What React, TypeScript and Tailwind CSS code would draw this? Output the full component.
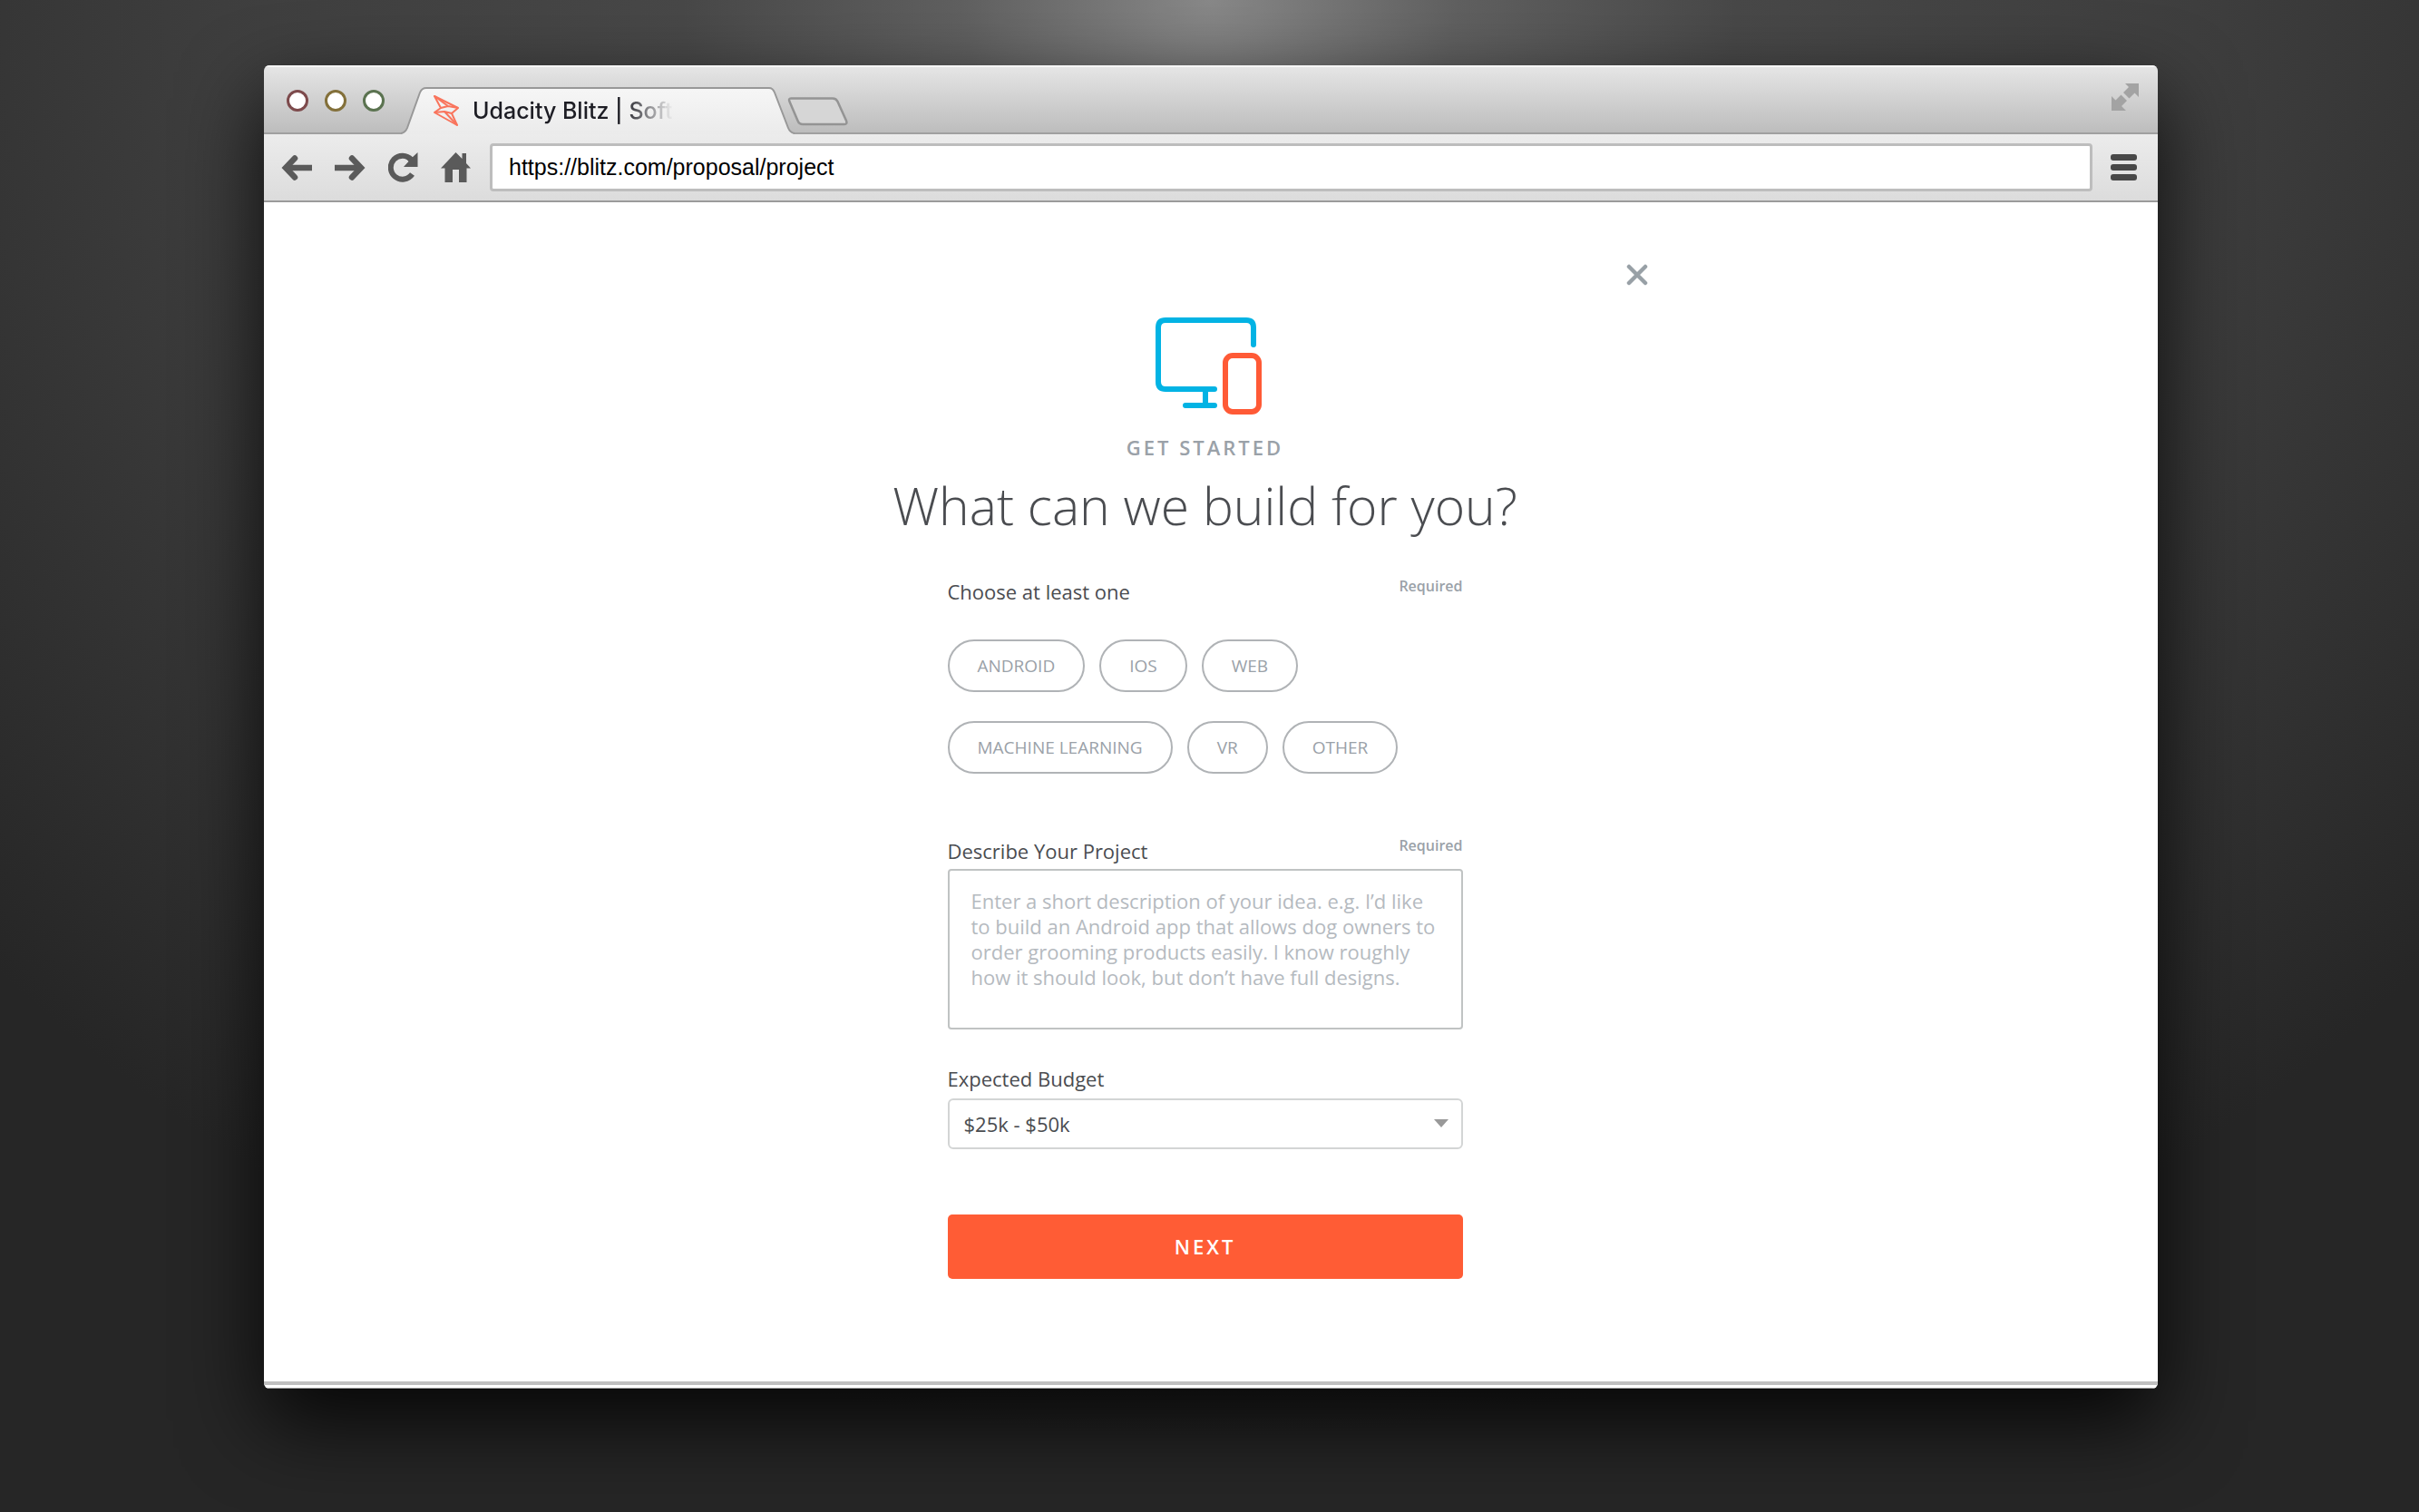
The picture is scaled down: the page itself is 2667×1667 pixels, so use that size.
import React from "react";

const pillRows = [
  ["ANDROID", "IOS", "WEB"],
  ["MACHINE LEARNING", "VR", "OTHER"],
];

function TitleBar() {
  return (
    <div className="flex h-[76px] items-end border-b-2 border-[#a0a0a0] bg-linear-to-b from-[#e6e6e6] to-[#bdbdbd] pl-[25px] shadow-[inset_0_2px_0_#f5f5f5]">
      <div className="flex h-full items-center gap-[18px] pt-1">
        <button aria-label="Close window" className="size-6 rounded-full border-[3px] border-[#7d4a4c] bg-white" />
        <button aria-label="Minimize window" className="size-6 rounded-full border-[3px] border-[#83703a] bg-white" />
        <button aria-label="Zoom window" className="size-6 rounded-full border-[3px] border-[#5b7350] bg-white" />
      </div>
      <div className="relative -mb-[2px] ml-[18px] flex h-[52px] w-[434px] items-center pl-[36px]">
        <svg className="absolute inset-0 size-full" viewBox="0 0 434 52" preserveAspectRatio="none" aria-hidden="true">
          <defs>
            <linearGradient id="tab" x1="0" y1="0" x2="0" y2="1">
              <stop offset="0" stopColor="#f6f6f6" />
              <stop offset="1" stopColor="#ebebeb" />
            </linearGradient>
          </defs>
          <path d="M0 52Q5 51 7 46L21 6Q23 1 28 1H406Q410 1 412 6L427 46Q429 51 434 52Z" fill="url(#tab)" />
          <path d="M0 51Q5 50 7 45L21 6Q23 1 28 1H406Q410 1 412 6L427 45Q429 50 434 51" fill="none" stroke="#989898" strokeWidth="2" />
        </svg>
        <svg className="relative h-[34px] w-[28px]" viewBox="0 0 28 34" fill="none" stroke="#f9745c" strokeWidth="2" strokeLinejoin="round" aria-hidden="true">
          <path d="M1 1L27 14L20 20L26 33L1 19L8 14Z" />
          <path d="M1 1L16 12M8 14L16 12L27 14M1 19L12 18L20 20M12 18L26 33" />
        </svg>
        <span className="relative ml-[15px] bg-linear-to-r from-[#1d1d24] from-75% to-transparent bg-clip-text font-['Inter'] text-[25px] leading-8 font-medium whitespace-nowrap text-transparent">
          Udacity Blitz | Soft
        </span>
      </div>
      <button aria-label="New tab" className="mb-[7px] -ml-[8px]">
        <svg className="block h-[32px] w-[68px]" viewBox="0 0 68 32">
          <path d="M4 1.500H50Q54 1.500 55.500 5L65 26Q66.500 30 63 30H17Q13 30 11.500 26L2.500 5Q1 1.500 4 1.500Z" fill="#d6d6d6" stroke="#949494" strokeWidth="2.500" />
        </svg>
      </button>
      <button aria-label="Full screen" className="mr-[21px] mb-[24px] ml-auto">
        <svg className="block size-[30px]" viewBox="0 0 30 30" fill="#a3a3a3">
          <path d="M15 0H30V15L25.500 10.500L19.500 16.500L13 10L19 4Z" />
          <path d="M0 14L4.500 18.500L10.500 12.500L17 19L11 25L16 30H0Z" />
        </svg>
      </button>
    </div>
  );
}

function Toolbar() {
  return (
    <div className="flex h-[75px] items-center border-b-2 border-[#9b9b9b] bg-linear-to-b from-[#ececec] to-[#dcdcdc] pr-[23px] pl-[19px] text-[#5a5a5a]">
      <button aria-label="Back">
        <svg className="h-[28px] w-[34px]" viewBox="0 0 34 28" fill="none" stroke="currentColor" strokeWidth="6.500">
          <path d="M4 14H34" />
          <path d="M15 3.500L5 14L15 24.500" strokeLinecap="round" />
        </svg>
      </button>
      <button aria-label="Forward" className="ml-[25px]">
        <svg className="h-[28px] w-[34px]" viewBox="0 0 34 28" fill="none" stroke="currentColor" strokeWidth="6.500">
          <path d="M0 14H30" />
          <path d="M19 3.500L29 14L19 24.500" strokeLinecap="round" />
        </svg>
      </button>
      <button aria-label="Reload" className="ml-[25px]">
        <svg className="size-[33px]" viewBox="0 0 33 33">
          <path d="M25.500 8A13 13 0 1 0 26.500 24" fill="none" stroke="currentColor" strokeWidth="6" />
          <path d="M32.500 0V16H17L22.500 10L20 7L26 6Z" fill="currentColor" />
        </svg>
      </button>
      <button aria-label="Home" className="ml-[25px]">
        <svg className="size-[33px]" viewBox="0 0 33 33" fill="currentColor">
          <path d="M16.500 0L23.500 7V1H28V12L33 17.500H28.500V33H20V19H13V33H4.500V17.500H0Z" />
        </svg>
      </button>
      <input
        aria-label="Address"
        defaultValue="https://blitz.com/proposal/project"
        className="ml-[21px] h-[53px] min-w-0 flex-1 rounded-[4px] border-[3px] border-[#bdbdbd] bg-white px-[18px] font-['Liberation_Sans'] text-[25px] text-black outline-none"
      />
      <button aria-label="Menu" className="ml-[20px] flex w-[29px] flex-col gap-[4px]">
        <span className="h-[7px] rounded-[3px] bg-[#484848]" />
        <span className="h-[7px] rounded-[3px] bg-[#484848]" />
        <span className="h-[7px] rounded-[3px] bg-[#484848]" />
      </button>
    </div>
  );
}

function ProjectForm() {
  return (
    <main className="relative flex flex-1 flex-col items-center bg-white pt-[126px] pr-[13px] font-['Open_Sans',sans-serif] text-[#4a4c50]">
      <div className="absolute inset-x-0 top-[68px] flex justify-center pr-[13px]">
        <div className="flex w-[976px] justify-end">
          <button aria-label="Close" className="text-[#98a0a6]">
            <svg className="size-[24px]" viewBox="0 0 24 24" fill="none" stroke="currentColor" strokeWidth="4.500" strokeLinecap="round">
              <path d="M3 3L21 21M21 3L3 21" />
            </svg>
          </button>
        </div>
      </div>
      <svg className="ml-[7px] h-[108px] w-[118px]" viewBox="0 0 118 108" fill="none" strokeLinecap="round" aria-hidden="true">
        <path d="M109 31V12Q109 4 101 4H12Q4 4 4 12V72Q4 80 12 80H66M34 98H66M56 80V98" stroke="#02b3e4" strokeWidth="6" />
        <rect x="78" y="43" width="37" height="62" rx="8" stroke="#ff5a36" strokeWidth="6" />
      </svg>
      <p className="mt-[20px] text-[22px] leading-[32px] font-semibold tracking-[3px] text-[#9aa1a8]">GET STARTED</p>
      <h1 className="mt-[9px] text-[57px] leading-[78px] font-light">What can we build for you?</h1>
      <form className="w-[568px]" onSubmit={(e) => e.preventDefault()}>
        <div role="group" aria-labelledby="platforms" className="mt-[38px]">
          <div className="flex items-start justify-between">
            <span id="platforms" className="pt-[2px] text-[22px] leading-[32px]">Choose at least one</span>
            <span className="text-[16px] leading-[24px] font-semibold text-[#9aa1a8]">Required</span>
          </div>
          <div className="mt-[37px] flex flex-col gap-[32px]">
            {pillRows.map((row) => (
              <div key={row[0]} className="flex gap-[16px]">
                {row.map((label) => (
                  <button key={label} type="button" className="h-[58px] rounded-full border-2 border-[#b0b3b6] px-[31px] text-[19px] leading-[28px] text-[#9aa1a8]">
                    {label}
                  </button>
                ))}
              </div>
            ))}
          </div>
        </div>
        <div className="mt-[67px] flex items-start justify-between">
          <label htmlFor="description" className="pt-[2px] text-[22px] leading-[32px]">Describe Your Project</label>
          <span className="text-[16px] leading-[24px] font-semibold text-[#9aa1a8]">Required</span>
        </div>
        <textarea
          id="description"
          placeholder="Enter a short description of your idea. e.g. I’d like to build an Android app that allows dog owners to order grooming products easily. I know roughly how it should look, but don’t have full designs."
          className="mt-[4px] block h-[177px] w-full resize-none rounded-[4px] border-2 border-[#c0c3c3] px-[24px] py-[19px] text-[22px] leading-[28px] outline-none placeholder:text-[#b5babf]"
        />
        <label htmlFor="budget" className="mt-[38px] block text-[22px] leading-[32px]">Expected Budget</label>
        <div className="relative mt-[6px]">
          <select id="budget" className="block h-[56px] w-full appearance-none rounded-[6px] border-2 border-[#d3d5d5] bg-white px-[16px] text-[22px] outline-none">
            <option>$25k - $50k</option>
          </select>
          <svg className="pointer-events-none absolute top-[23px] right-[16px] h-[9px] w-[16px]" viewBox="0 0 16 9" fill="#999" aria-hidden="true">
            <path d="M0 0H16L8 9Z" />
          </svg>
        </div>
        <button type="submit" className="mt-[72px] block h-[71px] w-full rounded-[5px] bg-[#ff5c35] text-[22px] font-semibold tracking-[3px] text-white">
          NEXT
        </button>
      </form>
    </main>
  );
}

export default function App() {
  return (
    <div className="flex min-h-screen flex-col bg-[#262626] bg-[radial-gradient(ellipse_68%_95%_at_50%_0%,#888888_0%,#606060_15%,#484848_32%,#3e3e3e_60%,#262626_100%)] pt-[72px] pr-[288px] pb-[136px] pl-[291px]">
      <div className="flex flex-1 flex-col rounded-[6px] shadow-[0_36px_90px_rgba(0,0,0,0.85)]">
        <div className="flex flex-1 flex-col overflow-hidden rounded-[6px]">
          <TitleBar />
          <Toolbar />
          <ProjectForm />
          <div className="h-[8px] border-t-4 border-b border-t-[#bfbfbf] border-b-[#a0a0a0] bg-white" />
        </div>
      </div>
    </div>
  );
}
